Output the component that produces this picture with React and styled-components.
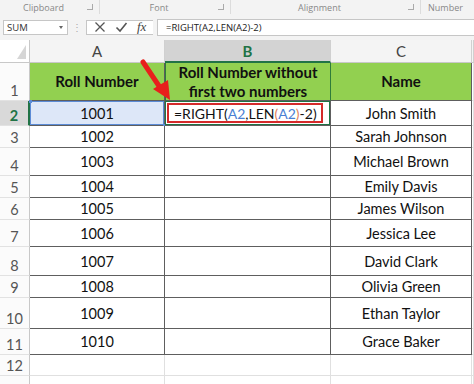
import React from 'react'
import styled, { createGlobalStyle } from 'styled-components'

const GlobalStyle = createGlobalStyle`
  html, body { margin: 0; padding: 0; background: #ffffff; }
  body { font-family: 'Lato', 'Liberation Sans', sans-serif; overflow: hidden; }
`

const rows = [
  { n: 1, h: 38 },
  { n: 2, h: 25, a: '1001', c: 'John Smith' },
  { n: 3, h: 22, a: '1002', c: 'Sarah Johnson' },
  { n: 4, h: 28, a: '1003', c: 'Michael Brown' },
  { n: 5, h: 22, a: '1004', c: 'Emily Davis' },
  { n: 6, h: 22, a: '1005', c: 'James Wilson' },
  { n: 7, h: 27, a: '1006', c: 'Jessica Lee' },
  { n: 8, h: 29, a: '1007', c: 'David Clark' },
  { n: 9, h: 22, a: '1008', c: 'Olivia Green' },
  { n: 10, h: 31, a: '1009', c: 'Ethan Taylor' },
  { n: 11, h: 26, a: '1010', c: 'Grace Baker' },
  { n: 12, h: 21 },
  { n: 13, h: 21 },
]

const Page = styled.div`
  position: relative;
  width: 474px;
  height: 384px;
  overflow: hidden;
  background: #fff;
`

const Ribbon = styled.div`
  display: flex;
  align-items: center;
  height: 14px;
  background: #f3f3f3;
  font-family: 'Open Sans', 'Liberation Sans', sans-serif;
  font-size: 9px;
  color: #888;
`

const Group = styled.div`
  display: flex;
  align-items: center;
  width: ${p => p.$w}px;
  height: 100%;
  border-right: ${p => (p.$last ? 'none' : '1px solid #dcdcdc')};
  box-sizing: border-box;
  padding-right: 4px;
`

const GroupLabel = styled.span`
  flex: 1;
  text-align: center;
`

const Launcher = styled.span`
  width: 5px;
  height: 5px;
  border-right: 1px solid #aaa;
  border-bottom: 1px solid #aaa;
  margin-right: 2px;
`

const FormulaBar = styled.div`
  display: flex;
  align-items: center;
  height: 26px;
  padding: 0 0 0 3px;
  background: #f3f3f3;
  font-family: 'Open Sans', 'Liberation Sans', sans-serif;
`

const NameBox = styled.div`
  display: flex;
  align-items: center;
  justify-content: space-between;
  width: 65px;
  height: 15px;
  padding: 0 4px 0 3px;
  box-sizing: border-box;
  background: #fff;
  border: 1px solid #c6c6c6;
  font-size: 9.5px;
  color: #333;
`

const Caret = styled.span`
  width: 0;
  height: 0;
  border-left: 2.5px solid transparent;
  border-right: 2.5px solid transparent;
  border-top: 3px solid #666;
`

const Dots = styled.span`
  width: 18px;
  text-align: center;
  color: #aaa;
  font-size: 10px;
  line-height: 1;
`

const IconBox = styled.div`
  display: flex;
  align-items: center;
  justify-content: space-around;
  width: 67px;
  height: 15px;
  box-sizing: border-box;
  background: #fff;
  border: 1px solid #c6c6c6;
  border-right: none;
  padding: 0 2px;
`

const Fx = styled.span`
  font-family: 'Liberation Serif', serif;
  font-style: italic;
  font-size: 13px;
  color: #444;
`

const FormulaInput = styled.div`
  flex: 1;
  display: flex;
  align-items: center;
  height: 15px;
  margin-left: 4px;
  padding-left: 8px;
  background: #fff;
  border: 1px solid #c6c6c6;
  border-right: none;
  font-size: 9.5px;
  color: #222;
`

const Sheet = styled.div`
  display: grid;
  grid-template-columns: 30px 135px 166px 141px 2px;
  grid-template-rows: 23px ${p => p.$rows};
`

const Corner = styled.div`
  position: relative;
  background: #fff;
  border-right: 1px solid #c8c8c8;
  border-bottom: 1px solid #c8c8c8;
  &::after {
    content: '';
    position: absolute;
    right: 3px;
    bottom: 3px;
    border-left: 9px solid transparent;
    border-bottom: 14px solid #d6d6d6;
  }
`

const ColHead = styled.div`
  display: flex;
  align-items: center;
  justify-content: center;
  background: ${p => (p.$active ? '#d3d3d3' : '#f4f4f4')};
  border-right: 1px solid #d0d0d0;
  border-bottom: ${p => (p.$active ? '2px solid #217346' : '1px solid #c8c8c8')};
  box-sizing: border-box;
  font-size: 15px;
  font-weight: ${p => (p.$active ? 700 : 400)};
  color: ${p => (p.$active ? '#217346' : '#444')};
`

const RowHead = styled.div`
  display: flex;
  align-items: flex-end;
  justify-content: center;
  padding-bottom: 1px;
  box-sizing: border-box;
  background: ${p => (p.$active ? '#d9d9d9' : '#fbfbfb')};
  border-right: ${p => (p.$active ? '2px solid #217346' : '1px solid #c8c8c8')};
  border-bottom: 1px solid #e2e2e2;
  font-size: 14.5px;
  font-weight: ${p => (p.$active ? 700 : 400)};
  color: ${p => (p.$active ? '#217346' : '#555')};
`

const Cell = styled.div`
  position: relative;
  display: flex;
  align-items: center;
  justify-content: center;
  box-sizing: border-box;
  text-align: center;
  font-size: 14.5px;
  line-height: 19px;
  color: #111;
  background: ${p => p.$bg || '#fff'};
  border-right: 1px solid ${p => (p.$table ? '#5e5e5e' : '#e0e0e0')};
  border-bottom: 1px solid ${p => (p.$table ? '#5e5e5e' : '#e0e0e0')};
`

const HeaderCell = styled(Cell)`
  background: #92d050;
  font-weight: 700;
  font-size: 15px;
  border-left: ${p => (p.$active ? '1px solid #2f7d3a' : 'none')};
  border-right-color: ${p => (p.$active ? '#2f7d3a' : '#5e5e5e')};
`

const RefCell = styled(Cell)`
  background: #dde7f8;
  box-shadow: inset 0 0 0 1px #5b8bd6;
  &::before, &::after {
    content: '';
    position: absolute;
    width: 3px;
    height: 3px;
    background: #5b8bd6;
  }
  &::before { left: -1px; top: -1px; }
  &::after { right: -2px; bottom: -2px; }
`

const EditCell = styled(Cell)`
  justify-content: flex-start;
  padding-left: 2px;
  box-shadow: inset 0 0 0 1px #217346;
`

const RedBox = styled.div`
  display: flex;
  align-items: center;
  height: 20px;
  width: 156px;
  padding-left: 5px;
  box-sizing: border-box;
  border: 2px solid #d42a2a;
  font-size: 14px;
  white-space: nowrap;
`

const Ref = styled.span`
  color: ${p => p.$c};
`

const Arrow = styled.svg`
  position: absolute;
  left: 138px;
  top: 57px;
`

function Formula() {
  return (
    <RedBox>
      =RIGHT(<Ref $c="#4a7fd4">A2</Ref>,LEN<Ref $c="#e0805a">(</Ref>
      <Ref $c="#4a7fd4">A2</Ref><Ref $c="#e0805a">)</Ref>-2)
    </RedBox>
  )
}

export default function App() {
  const rowTemplate = rows.map(r => r.h + 'px').join(' ')
  return (
    <Page>
      <GlobalStyle />
      <Ribbon>
        <Group $w={100}><GroupLabel>Clipboard</GroupLabel><Launcher /></Group>
        <Group $w={131}><GroupLabel>Font</GroupLabel><Launcher /></Group>
        <Group $w={190}><GroupLabel>Alignment</GroupLabel><Launcher /></Group>
        <Group $w={53} $last><GroupLabel>Number</GroupLabel></Group>
      </Ribbon>
      <FormulaBar>
        <NameBox>SUM<Caret /></NameBox>
        <Dots>⋮</Dots>
        <IconBox>
          <svg width="12" height="12" viewBox="0 0 12 12">
            <path d="M1.5 1.5 L10.5 10.5 M10.5 1.5 L1.5 10.5" stroke="#555" strokeWidth="1.3" />
          </svg>
          <svg width="13" height="12" viewBox="0 0 13 12">
            <path d="M1.5 6.5 L5 10 L11.5 2" stroke="#555" strokeWidth="1.6" fill="none" />
          </svg>
          <Fx>fx</Fx>
        </IconBox>
        <FormulaInput>=RIGHT(A2,LEN(A2)-2)</FormulaInput>
      </FormulaBar>
      <Sheet $rows={rowTemplate}>
        <Corner />
        <ColHead>A</ColHead>
        <ColHead $active>B</ColHead>
        <ColHead>C</ColHead>
        <ColHead />
        {rows.map(r => {
          const inTable = r.n <= 11
          const active = r.n === 2
          return (
            <React.Fragment key={r.n}>
              <RowHead $active={active}>{r.n <= 12 ? r.n : ''}</RowHead>
              {r.n === 1 ? (
                <>
                  <HeaderCell $table>Roll Number</HeaderCell>
                  <HeaderCell $table $active>Roll Number without<br />first two numbers</HeaderCell>
                  <HeaderCell $table>Name</HeaderCell>
                </>
              ) : active ? (
                <>
                  <RefCell $table>{r.a}</RefCell>
                  <EditCell $table><Formula /></EditCell>
                  <Cell $table>{r.c}</Cell>
                </>
              ) : (
                <>
                  <Cell $table={inTable}>{r.a}</Cell>
                  <Cell $table={inTable} />
                  <Cell $table={inTable}>{r.c}</Cell>
                </>
              )}
              <Cell />
            </React.Fragment>
          )
        })}
      </Sheet>
      <Arrow width="40" height="46" viewBox="0 0 40 46">
        <line x1="5" y1="5" x2="23" y2="32" stroke="#e8201c" strokeWidth="5" strokeLinecap="round" />
        <polygon points="15,32 32,43 30,23" fill="#e8201c" />
      </Arrow>
    </Page>
  )
}
